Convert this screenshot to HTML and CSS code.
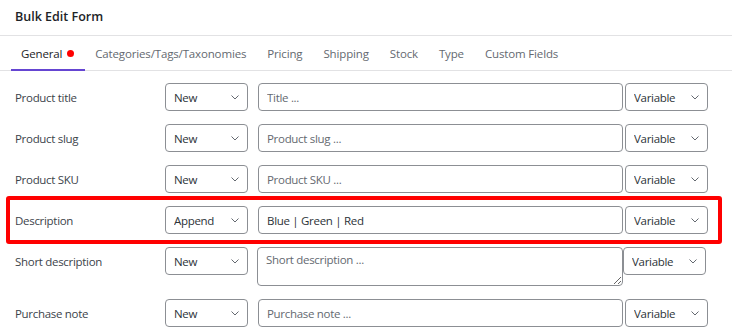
FILE: index.html
```html
<!DOCTYPE html>
<html lang="en">
<head>
    <meta charset="UTF-8">
    <title>Bulk Edit Form</title>
    <link rel="stylesheet" href="styles.css">
</head>
<body>
    <div class="panel">
        <div class="panel-head">Bulk Edit Form</div>
        <ul class="tabs">
            <li class="active">General <span class="dot"></span></li>
            <li>Categories/Tags/Taxonomies</li>
            <li>Pricing</li>
            <li>Shipping</li>
            <li>Stock</li>
            <li>Type</li>
            <li>Custom Fields</li>
        </ul>
        <div class="form">
            <div class="row">
                <label>Product title</label>
                <div class="pick"><select><option>New</option></select><svg viewBox="0 0 8 5"><path d="M0.5 0.5 L4 4 L7.5 0.5"/></svg></div>
                <input class="text" type="text" placeholder="Title ...">
                <div class="pick"><select><option>Variable</option></select><svg viewBox="0 0 8 5"><path d="M0.5 0.5 L4 4 L7.5 0.5"/></svg></div>
            </div>
            <div class="row">
                <label>Product slug</label>
                <div class="pick"><select><option>New</option></select><svg viewBox="0 0 8 5"><path d="M0.5 0.5 L4 4 L7.5 0.5"/></svg></div>
                <input class="text" type="text" placeholder="Product slug ...">
                <div class="pick"><select><option>Variable</option></select><svg viewBox="0 0 8 5"><path d="M0.5 0.5 L4 4 L7.5 0.5"/></svg></div>
            </div>
            <div class="row">
                <label>Product SKU</label>
                <div class="pick"><select><option>New</option></select><svg viewBox="0 0 8 5"><path d="M0.5 0.5 L4 4 L7.5 0.5"/></svg></div>
                <input class="text" type="text" placeholder="Product SKU ...">
                <div class="pick"><select><option>Variable</option></select><svg viewBox="0 0 8 5"><path d="M0.5 0.5 L4 4 L7.5 0.5"/></svg></div>
            </div>
            <div class="row marked">
                <label>Description</label>
                <div class="pick"><select><option>Append</option></select><svg viewBox="0 0 8 5"><path d="M0.5 0.5 L4 4 L7.5 0.5"/></svg></div>
                <input class="text" type="text" value="Blue | Green | Red">
                <div class="pick"><select><option>Variable</option></select><svg viewBox="0 0 8 5"><path d="M0.5 0.5 L4 4 L7.5 0.5"/></svg></div>
            </div>
            <div class="row tall">
                <label>Short description</label>
                <div class="pick"><select><option>New</option></select><svg viewBox="0 0 8 5"><path d="M0.5 0.5 L4 4 L7.5 0.5"/></svg></div>
                <textarea class="area" placeholder="Short description ..."></textarea>
                <div class="pick"><select><option>Variable</option></select><svg viewBox="0 0 8 5"><path d="M0.5 0.5 L4 4 L7.5 0.5"/></svg></div>
            </div>
            <div class="row">
                <label>Purchase note</label>
                <div class="pick"><select><option>New</option></select><svg viewBox="0 0 8 5"><path d="M0.5 0.5 L4 4 L7.5 0.5"/></svg></div>
                <input class="text" type="text" placeholder="Purchase note ...">
                <div class="pick"><select><option>Variable</option></select><svg viewBox="0 0 8 5"><path d="M0.5 0.5 L4 4 L7.5 0.5"/></svg></div>
            </div>
        </div>
    </div>
</body>
</html>
```
FILE: styles.css
```css
*{
    margin: 0;
    padding: 0;
    box-sizing: border-box;
}
body{
    background: #fff;
    font-family: "Open Sans", "Noto Sans", sans-serif;
    font-size: 11.5px;
    letter-spacing: -0.3px;
    color: #3c434a;
}
.panel{
    width: 732px;
}
.panel-head{
    height: 36px;
    padding: 0 15px;
    line-height: 34px;
    font-size: 12.5px;
    letter-spacing: 0;
    font-weight: 600;
    color: #1d2327;
    border-bottom: 1px solid #e2e2e4;
}
.tabs{
    display: flex;
    list-style: none;
    padding-left: 10.5px;
    border-bottom: 1px solid #e2e2e4;
}
.tabs li{
    display: flex;
    align-items: center;
    gap: 5px;
    height: 35px;
    padding: 2px 10.5px 0;
    font-size: 11.5px;
    letter-spacing: -0.15px;
    color: #646970;
    border-bottom: 2px solid transparent;
    margin-bottom: -1px;
}
.tabs .active{
    color: #1d2327;
    border-bottom-color: #6545d2;
}
.dot{
    width: 7px;
    height: 7px;
    border-radius: 50%;
    background: #f00;
}
.form{
    display: flex;
    flex-direction: column;
    gap: 13px;
    padding: 12px 0 0 15px;
}
.row{
    display: flex;
    align-items: flex-start;
    width: 693px;
}
.row label{
    width: 150px;
    padding-top: 1px;
    line-height: 27px;
    color: #3c434a;
}
.pick{
    display: flex;
    align-items: center;
    width: 83px;
    height: 28px;
    padding: 1px 8px 0;
    border: 1px solid #8c8f94;
    border-radius: 4px;
    background: #fff;
}
.pick select{
    flex: 1;
    min-width: 0;
    appearance: none;
    border: 0;
    background: none;
    outline: none;
    font: inherit;
    letter-spacing: inherit;
    color: #2c3338;
}
.pick svg{
    width: 8px;
    height: 5px;
    margin-top: -1px;
    fill: none;
    stroke: #646970;
    stroke-width: 1;
}
.text,.area{
    width: 365px;
    height: 28px;
    margin: 0 2px 0 10px;
    padding: 1px 8px 0;
    border: 1px solid #8c8f94;
    border-radius: 4px;
    font: inherit;
    letter-spacing: inherit;
    color: #2c3338;
    outline: none;
}
.text::placeholder,.area::placeholder{
    color: #646970;
}
.area{
    width: 366px;
    height: 39px;
    margin: 0 0 0 9px;
    padding: 4px 8px;
    resize: both;
}
.marked{
    width: 716px;
    margin: -10px 0 -10px -9px;
    padding: 6px 10px 6px 5px;
    border: 4px solid #f00;
    border-radius: 3px;
}
```
